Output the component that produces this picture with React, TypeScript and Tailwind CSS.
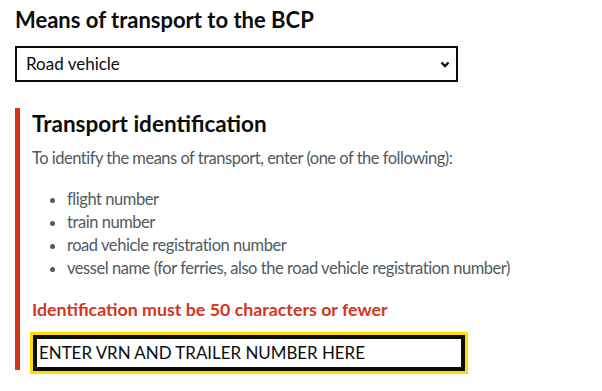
import React from "react";

export default function App() {
  return (
    <div className="w-[602px] h-[391px] bg-white overflow-hidden pl-[15px] pt-[4px] text-[#0b0c0c]" style={{ fontFamily: "Lato, 'Noto Sans', sans-serif" }}>
      <h1 className="text-[22px] leading-[31px] font-bold">Means of transport to the BCP</h1>
      <div className="mt-[11px] w-[443px] h-[36px] border-2 border-[#0b0c0c] flex items-center justify-between pl-[9px] pr-[6px]">
        <span className="text-[17px]">Road vehicle</span>
        <svg width="10" height="7" viewBox="0 0 10 7" className="mt-[1px]">
          <path d="M1.5 1.5 L5 5 L8.5 1.5" fill="none" stroke="#0b0c0c" strokeWidth="2.4" />
        </svg>
      </div>
      <div className="mt-[26px] border-l-[5px] border-[#d4351c] pl-[12px] pt-[1px] h-[262px] w-[580px]">
        <h2 className="text-[22.5px] leading-[30px] font-bold">Transport identification</h2>
        <p className="mt-[7px] text-[16.5px] tracking-[-0.5px] leading-[24px] text-[#505a5f]">To identify the means of transport, enter (one of the following):</p>
        <ul className="mt-[18px] pl-[35px] list-disc text-[16.5px] tracking-[-0.45px] leading-[23px] text-[#505a5f] marker:text-[#505a5f]">
          <li>flight number</li>
          <li>train number</li>
          <li>road vehicle registration number</li>
          <li>vessel name (for ferries, also the road vehicle registration number)</li>
        </ul>
        <p className="mt-[17px] text-[17.8px] leading-[24px] font-bold text-[#d4351c]">Identification must be 50 characters or fewer</p>
        <div className="mt-[14px] ml-[1px] w-[432px] h-[36px] border-4 border-[#0b0c0c] outline-[3px] outline-solid outline-[#ffdd00] flex items-center pl-[2px]">
          <span className="text-[16.9px] text-[#0b0c0c]">ENTER VRN AND TRAILER NUMBER HERE</span>
        </div>
      </div>
    </div>
  );
}
